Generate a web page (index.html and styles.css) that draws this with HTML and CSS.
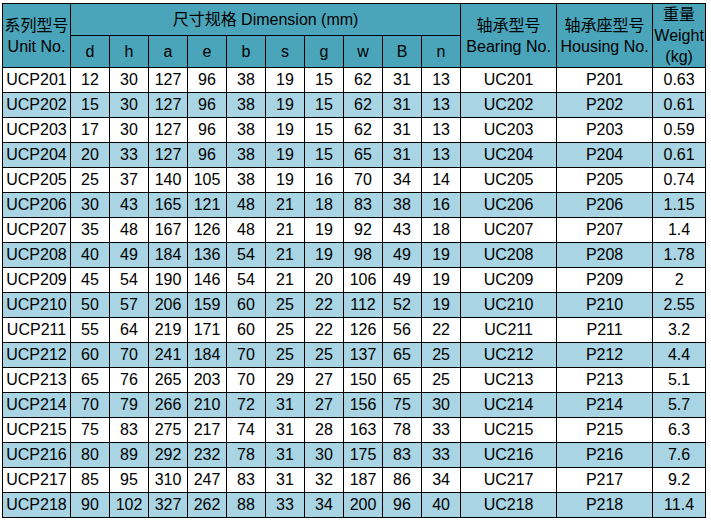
FILE: index.html
```html
<!DOCTYPE html>
<html lang="zh">
<head>
<meta charset="utf-8">
<title>UCP</title>
<link rel="stylesheet" href="styles.css">
</head>
<body>
<div class="sheet">
<table class="spec">
<colgroup>
<col class="c-unit"><col class="c-dim"><col class="c-dim"><col class="c-dim"><col class="c-dim"><col class="c-dim"><col class="c-dim"><col class="c-dim"><col class="c-dim"><col class="c-dim"><col class="c-dim"><col class="c-no"><col class="c-no"><col class="c-wt">
</colgroup>
<thead>
<tr class="h1">
<th rowspan="2">系列型号<br>Unit No.</th>
<th colspan="10">尺寸规格 Dimension (mm)</th>
<th rowspan="2">轴承型号<br>Bearing No.</th>
<th rowspan="2">轴承座型号<br>Housing No.</th>
<th rowspan="2">重量<br>Weight<br>(kg)</th>
</tr>
<tr class="h2">
<th>d</th><th>h</th><th>a</th><th>e</th><th>b</th><th>s</th><th>g</th><th>w</th><th>B</th><th>n</th>
</tr>
</thead>
<tbody>
<tr><td>UCP201</td><td>12</td><td>30</td><td>127</td><td>96</td><td>38</td><td>19</td><td>15</td><td>62</td><td>31</td><td>13</td><td>UC201</td><td>P201</td><td>0.63</td></tr>
<tr><td>UCP202</td><td>15</td><td>30</td><td>127</td><td>96</td><td>38</td><td>19</td><td>15</td><td>62</td><td>31</td><td>13</td><td>UC202</td><td>P202</td><td>0.61</td></tr>
<tr><td>UCP203</td><td>17</td><td>30</td><td>127</td><td>96</td><td>38</td><td>19</td><td>15</td><td>62</td><td>31</td><td>13</td><td>UC203</td><td>P203</td><td>0.59</td></tr>
<tr><td>UCP204</td><td>20</td><td>33</td><td>127</td><td>96</td><td>38</td><td>19</td><td>15</td><td>65</td><td>31</td><td>13</td><td>UC204</td><td>P204</td><td>0.61</td></tr>
<tr><td>UCP205</td><td>25</td><td>37</td><td>140</td><td>105</td><td>38</td><td>19</td><td>16</td><td>70</td><td>34</td><td>14</td><td>UC205</td><td>P205</td><td>0.74</td></tr>
<tr><td>UCP206</td><td>30</td><td>43</td><td>165</td><td>121</td><td>48</td><td>21</td><td>18</td><td>83</td><td>38</td><td>16</td><td>UC206</td><td>P206</td><td>1.15</td></tr>
<tr><td>UCP207</td><td>35</td><td>48</td><td>167</td><td>126</td><td>48</td><td>21</td><td>19</td><td>92</td><td>43</td><td>18</td><td>UC207</td><td>P207</td><td>1.4</td></tr>
<tr class="sel"><td>UCP208</td><td>40</td><td>49</td><td>184</td><td>136</td><td>54</td><td>21</td><td>19</td><td>98</td><td>49</td><td>19</td><td>UC208</td><td>P208</td><td>1.78</td></tr>
<tr><td>UCP209</td><td>45</td><td>54</td><td>190</td><td>146</td><td>54</td><td>21</td><td>20</td><td>106</td><td>49</td><td>19</td><td>UC209</td><td>P209</td><td>2</td></tr>
<tr><td>UCP210</td><td>50</td><td>57</td><td>206</td><td>159</td><td>60</td><td>25</td><td>22</td><td>112</td><td>52</td><td>19</td><td>UC210</td><td>P210</td><td>2.55</td></tr>
<tr><td>UCP211</td><td>55</td><td>64</td><td>219</td><td>171</td><td>60</td><td>25</td><td>22</td><td>126</td><td>56</td><td>22</td><td>UC211</td><td>P211</td><td>3.2</td></tr>
<tr><td>UCP212</td><td>60</td><td>70</td><td>241</td><td>184</td><td>70</td><td>25</td><td>25</td><td>137</td><td>65</td><td>25</td><td>UC212</td><td>P212</td><td>4.4</td></tr>
<tr><td>UCP213</td><td>65</td><td>76</td><td>265</td><td>203</td><td>70</td><td>29</td><td>27</td><td>150</td><td>65</td><td>25</td><td>UC213</td><td>P213</td><td>5.1</td></tr>
<tr><td>UCP214</td><td>70</td><td>79</td><td>266</td><td>210</td><td>72</td><td>31</td><td>27</td><td>156</td><td>75</td><td>30</td><td>UC214</td><td>P214</td><td>5.7</td></tr>
<tr><td>UCP215</td><td>75</td><td>83</td><td>275</td><td>217</td><td>74</td><td>31</td><td>28</td><td>163</td><td>78</td><td>33</td><td>UC215</td><td>P215</td><td>6.3</td></tr>
<tr><td>UCP216</td><td>80</td><td>89</td><td>292</td><td>232</td><td>78</td><td>31</td><td>30</td><td>175</td><td>83</td><td>33</td><td>UC216</td><td>P216</td><td>7.6</td></tr>
<tr><td>UCP217</td><td>85</td><td>95</td><td>310</td><td>247</td><td>83</td><td>31</td><td>32</td><td>187</td><td>86</td><td>34</td><td>UC217</td><td>P217</td><td>9.2</td></tr>
<tr><td>UCP218</td><td>90</td><td>102</td><td>327</td><td>262</td><td>88</td><td>33</td><td>34</td><td>200</td><td>96</td><td>40</td><td>UC218</td><td>P218</td><td>11.4</td></tr>
</tbody>
</table>
</div>
</body>
</html>
```
FILE: styles.css
```css
html, body {
  margin: 0;
  padding: 0;
  background: #ffffff;
}
.sheet {
  padding: 3px 0 0 2px;
}
.spec {
  border-collapse: collapse;
  table-layout: fixed;
  width: 704px;
  font-family: "Liberation Sans", "Noto Sans CJK SC", Arial, sans-serif;
  font-size: 16px;
  color: #000;
}
.c-unit { width: 68px; }
.c-dim { width: 39px; }
.c-no { width: 96px; }
.c-wt { width: 53px; }
.spec th, .spec td {
  border: 1px solid #000;
  padding: 0;
  text-align: center;
  vertical-align: middle;
  white-space: nowrap;
  overflow: hidden;
}
.spec th {
  background: #4aa4ba;
  font-weight: normal;
  line-height: 21px;
}
.spec .h1 { height: 32px; }
.spec .h2 { height: 32px; }
.spec tbody tr { height: 25px; }
.spec td { line-height: 20px; }
.spec tbody tr:nth-child(even) td { background: #a9d4e3; }
.spec .sel td:first-child { box-shadow: -2px 0 0 #5aa642; }
```
